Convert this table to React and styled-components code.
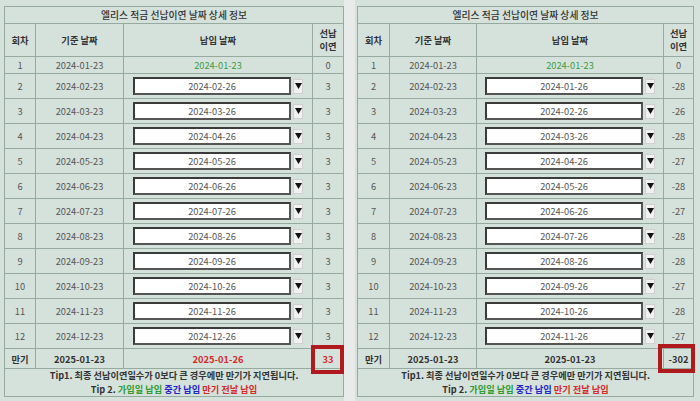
import React from 'react'
import styled, { createGlobalStyle } from 'styled-components'

const Global = createGlobalStyle`
  html, body { margin: 0; padding: 0; }
  body {
    background: #e8ebea;
    font-family: "Noto Sans CJK KR", "Noto Sans", sans-serif;
  }
`;

const Page = styled.div`
  width: 700px;
  height: 401px;
  display: flex;
  justify-content: space-between;
  overflow: hidden;
  background: #e8ebea;
`;

const Panel = styled.div`
  width: ${p => p.$w}px;
  height: 100%;
  box-sizing: border-box;
  padding: 6px 0 0 ${p => p.$pl}px;
  background: #d5e2dc;
`;

const Table = styled.table`
  border-collapse: collapse;
  table-layout: fixed;
  width: ${p => p.$w}px;
  color: #555;
  font-size: 9.3px;
  text-align: center;

  td, th {
    border: 1px solid #97aaa0;
    padding: 0;
  }
`;

const Title = styled.th`
  height: 16px;
  font-size: 9.8px;
  font-weight: 500;
  color: #333;
`;

const Head = styled.th`
  height: 32px;
  font-weight: 700;
  color: #333;
  line-height: 13px;
`;

const Row = styled.tr`
  height: ${p => p.$h}px;
`;

const Cell = styled.td`
  color: ${p => p.$color || '#555'};
  font-weight: ${p => (p.$bold ? 700 : 400)};
  position: relative;
`;

const PickWrap = styled.div`
  display: flex;
  align-items: center;
  justify-content: center;
  gap: 2px;
`;

const Pick = styled.div`
  width: 158px;
  height: 18px;
  box-sizing: border-box;
  border: 2px solid #3b3b3b;
  border-right-color: #555;
  border-bottom-color: #555;
  background: #fff;
  display: flex;
  align-items: center;
  justify-content: center;
  color: #555;
`;

const Arrow = styled.div`
  width: 10px;
  height: 15px;
  box-sizing: border-box;
  background: #f1f1f1;
  border: 1px solid #d0d0d0;
  display: flex;
  align-items: center;
  justify-content: center;
`;

const Mark = styled.div`
  position: absolute;
  top: ${p => p.$t}px;
  bottom: ${p => p.$b}px;
  left: ${p => p.$l}px;
  right: ${p => p.$r}px;
  border: 4px solid #b11a1d;
`;

const Tips = styled.td`
  height: 27px;
  font-weight: 700;
  color: #333;
  line-height: 13.4px;
  font-size: 9.2px;
`;

const Line = styled.div`
  white-space: nowrap;
`;

const Tone = styled.span`
  color: ${p => p.$c};
`;

const Tri = () => (
  <svg width="7" height="6" viewBox="0 0 7 6">
    <polygon points="0,0 7,0 3.5,6" fill="#111" />
  </svg>
);

const base = ['01', '02', '03', '04', '05', '06', '07', '08', '09', '10', '11', '12'];

const leftRows = base.map((m, i) => ({
  n: i + 1,
  base: `2024-${m}-23`,
  pay: i === 0 ? '2024-01-23' : `2024-${m}-26`,
  diff: i === 0 ? '0' : '3',
}));

const rightDiff = ['0', '-28', '-26', '-28', '-27', '-28', '-27', '-28', '-28', '-27', '-28', '-27'];
const rightRows = base.map((m, i) => ({
  n: i + 1,
  base: `2024-${m}-23`,
  pay: i === 0 ? '2024-01-23' : `2024-${base[i - 1]}-26`,
  diff: rightDiff[i],
}));

const Schedule = ({ cols, rows, end, mark }) => (
  <Table $w={cols.reduce((a, b) => a + b, 0)}>
    <colgroup>
      {cols.map((c, i) => <col key={i} style={{ width: c }} />)}
    </colgroup>
    <thead>
      <tr>
        <Title colSpan={4}>엘리스 적금 선납이연 날짜 상세 정보</Title>
      </tr>
      <tr>
        <Head>회차</Head>
        <Head>기준 날짜</Head>
        <Head>납입 날짜</Head>
        <Head>선납<br />이연</Head>
      </tr>
    </thead>
    <tbody>
      {rows.map(r => (
        <Row key={r.n} $h={r.n === 1 ? 17 : 25}>
          <Cell>{r.n}</Cell>
          <Cell>{r.base}</Cell>
          {r.n === 1 ? (
            <Cell $color="#3f9a3f">{r.pay}</Cell>
          ) : (
            <Cell>
              <PickWrap>
                <Pick>{r.pay}</Pick>
                <Arrow><Tri /></Arrow>
              </PickWrap>
            </Cell>
          )}
          <Cell>{r.diff}</Cell>
        </Row>
      ))}
      <Row $h={20}>
        <Cell $bold $color="#333">만기</Cell>
        <Cell $bold $color="#333">2025-01-23</Cell>
        <Cell $bold $color={end.color}>{end.pay}</Cell>
        <Cell $bold $color={end.color}>
          {end.diff}
          <Mark $t={mark.t} $b={mark.b} $l={mark.l} $r={mark.r} />
        </Cell>
      </Row>
      <tr>
        <Tips colSpan={4}>
          <Line>Tip1. 최종 선납이연일수가 0보다 큰 경우에만 만기가 지연됩니다.</Line>
          <Line>
            Tip 2. <Tone $c="#2f9a2f">가입일 납입</Tone> <Tone $c="#2323c8">중간 납입</Tone>{' '}
            <Tone $c="#d42a2a">만기 전날 납입</Tone>
          </Line>
        </Tips>
      </tr>
    </tbody>
  </Table>
);

const App = () => (
  <Page>
    <Global />
    <Panel $w={344} $pl={4}>
      <Schedule
        cols={[31, 88, 189, 31]}
        rows={leftRows}
        end={{ pay: '2025-01-26', diff: '33', color: '#d42a2a' }}
        mark={{ t: -4, b: -6, l: -2, r: -1 }}
      />
    </Panel>
    <Panel $w={345} $pl={2}>
      <Schedule
        cols={[32, 87, 187, 30]}
        rows={rightRows}
        end={{ pay: '2025-01-23', diff: '-302', color: '#333' }}
        mark={{ t: -5, b: -5, l: -6, r: -2 }}
      />
    </Panel>
  </Page>
);

export default App
